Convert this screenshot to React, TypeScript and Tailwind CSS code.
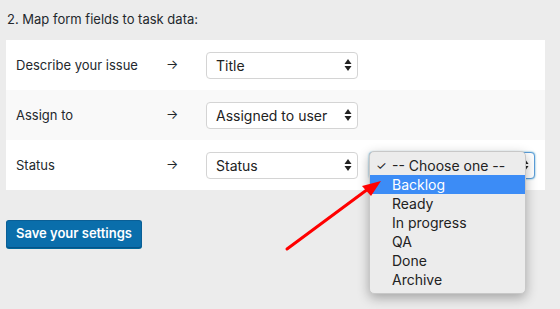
import React from "react";

function Stepper() {
  return (
    <svg width="8" height="14" viewBox="0 0 8 14" className="shrink-0">
      <path d="M4 1 L7.5 6 L0.5 6 Z" fill="#222" />
      <path d="M4 13 L7.5 8 L0.5 8 Z" fill="#222" />
    </svg>
  );
}

function Select({ label, width, focused }: { label: string; width: string; focused?: boolean }) {
  return (
    <div
      className={`${width} h-[27px] flex items-center justify-between pl-[9px] pr-[5px] rounded-[4px] bg-white text-[14px] text-[#222] ${
        focused ? "border border-[#5b9dd9] shadow-[0_0_2px_rgba(30,140,190,0.8)]" : "border border-[#d4d4d4]"
      }`}
    >
      <span>{label}</span>
      <Stepper />
    </div>
  );
}

function Row({ label, bg, children }: { label: string; bg: string; children: React.ReactNode }) {
  return (
    <div className={`h-[50px] flex items-center ${bg}`}>
      <div className="w-[160px] pl-[10px] pt-[1px] text-[13px] text-[#23282d]">{label}</div>
      <div className="w-[40px] text-[13px] text-[#23282d]">→</div>
      <div className="flex items-center gap-[11px]">{children}</div>
    </div>
  );
}

export default function App() {
  const items = ["Ready", "In progress", "QA", "Done", "Archive"];
  return (
    <div
      className="relative w-[560px] h-[309px] bg-[#ececec] overflow-hidden"
      style={{ fontFamily: "Inter, 'Noto Sans', sans-serif" }}
    >
      <div className="pt-[10px] pl-[7px] h-[40px] text-[13px] text-[#23282d]">2. Map form fields to task data:</div>
      <div className="ml-[6px] w-[539px]">
        <Row label="Describe your issue" bg="bg-white">
          <Select label="Title" width="w-[152px]" />
        </Row>
        <Row label="Assign to" bg="bg-[#f9f9f9]">
          <Select label="Assigned to user" width="w-[152px]" />
        </Row>
        <Row label="Status" bg="bg-white">
          <Select label="Status" width="w-[152px]" />
          <Select label="" width="w-[166px]" focused />
        </Row>
      </div>
      <div className="mt-[30px] ml-[6px]">
        <button className="w-[136px] h-[28px] rounded-[3px] bg-[#0a6eab] border border-[#0a5f96] border-b-[#065389] shadow-[0_1px_0_#006799] text-white text-[13px] font-semibold">
          Save your settings
        </button>
      </div>

      <div className="absolute left-[369px] top-[151px] w-[157px] py-[4px] rounded-[5px] bg-[#ececec] border border-[#c8c8c8] shadow-[0_4px_12px_rgba(0,0,0,0.3)] text-[14px] text-[#222]">
        <div className="h-[19px] flex items-center">
          <span className="w-[22px] pl-[6px] text-[12px]">✓</span>
          <span>-- Choose one --</span>
        </div>
        <div className="h-[19px] flex items-center bg-[#3c8cf6] text-white pl-[22px]">Backlog</div>
        {items.map((it) => (
          <div key={it} className="h-[19px] flex items-center pl-[22px]">
            {it}
          </div>
        ))}
      </div>

      <svg className="absolute left-0 top-0" width="560" height="309">
        <line x1="287" y1="249" x2="368" y2="189" stroke="#ff0000" strokeWidth="3" strokeLinecap="round" />
        <path d="M381 181 L362 186 L371 196 Z" fill="#ff0000" />
      </svg>
    </div>
  );
}
